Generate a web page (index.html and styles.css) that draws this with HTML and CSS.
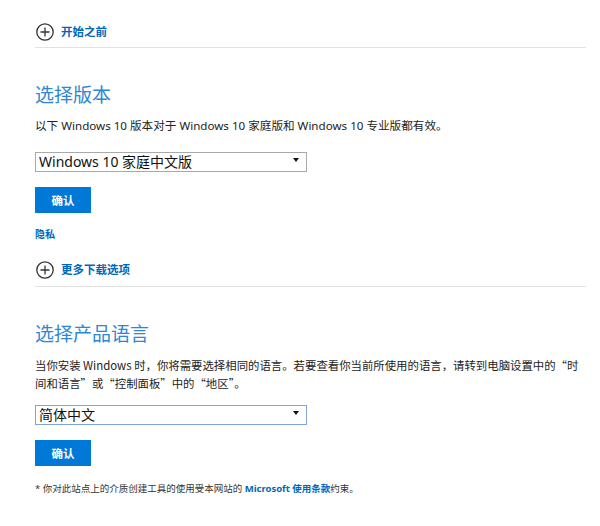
FILE: index.html
```html
<!DOCTYPE html>
<html lang="zh-CN">
<head>
<meta charset="utf-8">
<title>下载 Windows 10</title>
<link rel="stylesheet" href="styles.css">
</head>
<body>
<div class="page">
  <div class="expander first">
    <svg class="plus" width="18" height="18" viewBox="0 0 18 18"><circle cx="9" cy="9" r="8.2" fill="none" stroke="#333" stroke-width="1.3"/><path d="M9 4.5v9M4.5 9h9" stroke="#333" stroke-width="1.3" fill="none"/></svg>
    <a class="expander-link" href="#">开始之前</a>
  </div>

  <section class="section one">
    <h2 class="title">选择版本</h2>
    <p class="text">以下 Windows 10 版本对于 Windows 10 家庭版和 Windows 10 专业版都有效。</p>
    <div class="select-wrap">
      <select class="select"><option>Windows 10 家庭中文版</option></select>
    </div>
    <button class="btn">确认</button>
    <a class="privacy" href="#">隐私</a>
  </section>

  <div class="expander second">
    <svg class="plus" width="18" height="18" viewBox="0 0 18 18"><circle cx="9" cy="9" r="8.2" fill="none" stroke="#333" stroke-width="1.3"/><path d="M9 4.5v9M4.5 9h9" stroke="#333" stroke-width="1.3" fill="none"/></svg>
    <a class="expander-link" href="#">更多下载选项</a>
  </div>

  <section class="section two">
    <h2 class="title">选择产品语言</h2>
    <p class="text cjk">当你安装 Windows 时，你将需要选择相同的语言。若要查看你当前所使用的语言，请转到电脑设置中的“时间和语言”或“控制面板”中的“地区”。</p>
    <div class="select-wrap focus">
      <select class="select"><option>简体中文</option></select>
    </div>
    <button class="btn">确认</button>
    <p class="note">* 你对此站点上的介质创建工具的使用受本网站的 <a href="#">Microsoft 使用条款</a>约束。</p>
  </section>
</div>
</body>
</html>
```

FILE: styles.css
```css
* { box-sizing: border-box; }
body {
  margin: 0;
  background: #fff;
  font-family: "Noto Sans", "Noto Sans CJK SC", sans-serif;
  color: #222;
}
.page {
  width: 588px;
  padding-left: 35px;
}
.expander {
  display: flex;
  align-items: center;
  gap: 7px;
  padding-left: 1px;
  border-bottom: 1px solid #e2e2e2;
  margin-right: 2px;
}
.expander.first { padding-top: 23px; padding-bottom: 6px; }
.expander.second { margin-top: 19px; padding-bottom: 7px; }
.plus { display: block; flex: none; }
.expander-link {
  color: #0067b8;
  font-weight: bold;
  font-size: 11.5px;
  text-decoration: none;
  line-height: 18px;
}
.title {
  margin: 0;
  font-weight: normal;
  font-size: 19px;
  line-height: 24px;
  color: #2f87d3;
}
.section.one .title { margin-top: 35px; }
.section.two .title { margin-top: 35px; }
.text {
  margin: 10px 0 0;
  font-size: 11.6px;
  line-height: 18px;
  color: #222;
}
.text.cjk {
  margin-top: 10px;
  font-family: "Noto Sans CJK SC", "Noto Sans", sans-serif;
  font-size: 11.4px;
}
.select-wrap {
  position: relative;
  width: 272px;
  height: 20px;
  margin-top: 15px;
}
.section.two .select-wrap { margin-top: 11px; }
.select {
  appearance: none;
  -webkit-appearance: none;
  width: 100%;
  height: 20px;
  margin: 0;
  padding: 0 0 0 3px;
  border: 1px solid #a9a9a9;
  border-radius: 0;
  background: #fff;
  font-family: "Noto Sans", "Noto Sans CJK SC", sans-serif;
  font-size: 14px;
  line-height: 18px;
  color: #111;
}
.select-wrap.focus .select { border-color: #7ea6d8; }
.select-wrap::after {
  content: "";
  position: absolute;
  right: 8px;
  top: 8px;
  border-left: 3px solid transparent;
  border-right: 3px solid transparent;
  border-top: 4px solid #111;
}
.btn {
  display: block;
  width: 56px;
  height: 26px;
  margin-top: 17px;
  padding: 0;
  border: none;
  background: #0078d7;
  color: #fff;
  font-family: "Noto Sans CJK SC", sans-serif;
  font-weight: bold;
  font-size: 11.5px;
}
.privacy {
  display: block;
  margin-top: 13px;
  line-height: 16px;
  font-size: 10px;
  font-weight: bold;
  color: #0067b8;
  text-decoration: none;
}
.note {
  margin: 16px 0 0;
  font-size: 9.5px;
  line-height: 14px;
  color: #333;
}
.note a {
  color: #0067b8;
  font-weight: bold;
  text-decoration: none;
}
```
